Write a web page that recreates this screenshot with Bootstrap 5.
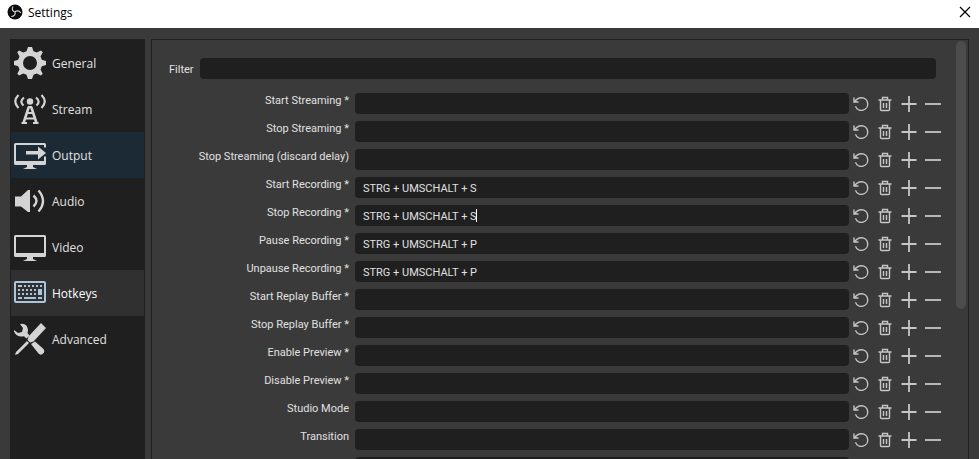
<!DOCTYPE html>
<html lang="en">
<head>
<meta charset="utf-8">
<meta name="viewport" content="width=device-width, initial-scale=1">
<title>Settings</title>
<link href="https://cdn.jsdelivr.net/npm/bootstrap@5.3.0/dist/css/bootstrap.min.css" rel="stylesheet">
<style>
body { background: #3a3a3a; color: #e1e0e1; font-family: "Open Sans", sans-serif; font-size: 12px; line-height: 16px; }
.title-bar { background: #fff; color: #000; height: 28px; padding: 0 8px 4px 7px; gap: 5px; }
.title-bar span { padding-top: 2px; }
.title-bar button { width: 12px; height: 12px; }
.workspace { padding: 11px 10px 0; gap: 6px; min-height: 0; }
.side-nav { background: #1f1f1f; width: 135px; padding: 1px; }
.side-link { height: 46px; padding: 0 3px; gap: 6px; color: #e1e0e1; text-decoration: none; }
.side-link span { padding-top: 2px; }
.side-link svg { width: 32px; height: 32px; flex: none; color: #d4d4d4; }
.side-link.hovered { background: #1c2a36; }
.side-link.current { background: #303030; color: #fff; }
.side-link.current svg { color: #a9c4dd; }
.panel { border: 1px solid #1f1f1f; border-bottom: 0; min-width: 0; padding: 1px 2px 0 17px; font-family: Roboto, sans-serif; font-size: 11px; }
.form-area { padding: 17px 11px 0 0; min-width: 0; }
.filter-row { gap: 7px; margin: 0 9px 14px 0; }
.filter-row label { width: 24px; padding-top: 2px; }
.dark-field { background: #1f1f1f; color: #e1e0e1; border: 0; border-radius: 4px; height: 21px; padding: 2px 8px 0; min-width: 0; outline: 0; font-size: 11px; }
.hotkey-row { height: 28px; flex: none; }
.hotkey-name { width: 180px; margin-right: 6px; line-height: 16px; flex: none; }
.tool-btn { width: 24px; height: 21px; color: #c6c6c6; }
.tool-btn svg { width: 16px; height: 16px; }
.caret { left: 121px; top: 4px; width: 1px; height: 13px; background: #fff; }
.scroll-thumb { width: 10px; height: 64%; background: #4c4c4c; border-radius: 5px; }
</style>
<script src="https://cdn.jsdelivr.net/npm/bootstrap@5.3.0/dist/js/bootstrap.bundle.min.js"></script>
</head>
<body class="vh-100 overflow-hidden d-flex flex-column">
<svg class="d-none" aria-hidden="true">
  <symbol id="i-reset" viewBox="0 0 16 16"><path d="M1 1.500v4.500h4.500M1.500 6C3 3.500 5.500 1.700 8.500 1.700a6.300 6.300 0 1 1-6 8.500" fill="none" stroke="currentColor" stroke-width="1.400"/></symbol>
  <symbol id="i-trash" viewBox="0 0 16 16"><path d="M1.500 4h13M5.500 4v-2.500h5v2.500M3.500 4v9.500q0 1 1 1h7q1 0 1-1v-9.500M6.500 7v5M9.500 7v5" fill="none" stroke="currentColor" stroke-width="1.400"/></symbol>
  <symbol id="i-plus" viewBox="0 0 16 16"><path d="M8 0v16M0.500 8h15" fill="none" stroke="currentColor" stroke-width="1.800"/></symbol>
  <symbol id="i-minus" viewBox="0 0 16 16"><path d="M0 8h16" fill="none" stroke="currentColor" stroke-width="1.800"/></symbol>
</svg>

<header class="title-bar d-flex align-items-center flex-shrink-0">
  <svg width="16" height="16" viewBox="0 0 32 32" aria-hidden="true">
    <circle cx="16" cy="16" r="15" fill="#0c0c0c"/>
    <g fill="none" stroke="#d0d0d0" stroke-width="2.400">
      <path id="blade" d="M16 16C11 15 9 10 12 5"/>
      <use href="#blade" transform="rotate(120 16 16)"/>
      <use href="#blade" transform="rotate(240 16 16)"/>
    </g>
  </svg>
  <span class="flex-grow-1">Settings</span>
  <button type="button" class="btn p-0 border-0 d-flex" aria-label="Close">
    <svg width="12" height="12" viewBox="0 0 12 12"><path d="M1 1l10 10M11 1L1 11" stroke="#000" stroke-width="1.200"/></svg>
  </button>
</header>

<main class="workspace d-flex flex-grow-1">
  <nav class="side-nav flex-shrink-0" aria-label="Sections">
    <a class="side-link d-flex align-items-center" href="#general">
      <svg viewBox="0 0 32 32" fill="currentColor"><path fill-rule="evenodd" d="M14 0h4l1.500 4.300 3.200 1.300L27 3.500 28.800 5.300 26.500 9.500l1.300 3.200L32 14v4l-4.200 1.300-1.300 3.200L28.700 26.700 27 28.500l-4.300-2-3.200 1.300L18 32h-4l-1.500-4.200-3.200-1.300L5 28.500 3.300 26.700l2.200-4.200-1.300-3.200L0 18v-4l4.200-1.300 1.300-3.200L3.200 5.300 5 3.500l4.300 2.100 3.200-1.300zM16 9a7 7 0 1 0 0 14 7 7 0 0 0 0-14z"/></svg>
      <span>General</span></a>
    <a class="side-link d-flex align-items-center" href="#stream">
      <svg viewBox="0 0 32 32" fill="none" stroke="currentColor"><path d="M4.500 2Q-2 8.500 4.500 15M27.500 2Q34 8.500 27.500 15M10 4.500Q5 8.500 9.500 12.500M22 4.500Q27 8.500 22.500 12.500" stroke-width="2.200"/><circle cx="16" cy="8.500" r="3.200" fill="currentColor" stroke="none"/><path d="M14.800 14L9.500 30M17.200 14L22.500 30" stroke-width="2.600"/><path d="M14 14h4M13 20h6M11.500 25.500h9M7.500 30h5.500M19 30h5.500" stroke-width="2"/></svg>
      <span>Stream</span></a>
    <a class="side-link hovered d-flex align-items-center" href="#output">
      <svg viewBox="0 -1 32 32" fill="currentColor"><path d="M1.500 3h29q1.500 0 1.500 1.500v3h-2V5H2v16h28v-4.500h2v7q0 1.500-1.500 1.500h-29Q0 25 0 23.500v-19Q0 3 1.500 3zM12 11h12V6.500l8 6.500-8 6.500v-5H12zM13 25h6v2l4 2H9l4-2z"/></svg>
      <span>Output</span></a>
    <a class="side-link d-flex align-items-center" href="#audio">
      <svg viewBox="0 0 32 32"><path d="M1 11.500h6L14 5h2v22h-2l-7-5.500H1z" fill="currentColor"/><path d="M19.500 10.500q6 5.500 0 11M24.500 5.500q9 10.500 0 21" fill="none" stroke="currentColor" stroke-width="2.400"/></svg>
      <span>Audio</span></a>
    <a class="side-link d-flex align-items-center" href="#video">
      <svg viewBox="0 -1 32 32" fill="currentColor"><path fill-rule="evenodd" d="M1.500 3h29Q32 3 32 4.500v19q0 1.500-1.500 1.500h-29Q0 25 0 23.500v-19Q0 3 1.500 3zM2 5v16h28V5zM13 25h6v2l4 2H9l4-2z"/></svg>
      <span>Video</span></a>
    <a class="side-link current d-flex align-items-center" href="#hotkeys" aria-current="page">
      <svg viewBox="0 -1 32 32" fill="none" stroke="currentColor" stroke-width="2"><rect x="1" y="4" width="30" height="20" rx="1"/><path d="M4 8h4M10 8h2M14 8h2M18 8h2M22 8h2M26 8h2M4 12h2M8 12h2M12 12h2M16 12h2M20 12h2M4 16h2M8 16h2M12 16h2M16 16h2M20 16h2M4 20h4M10 20h12M24 20h4"/><path d="M24 11h4v6h-4z" fill="currentColor" stroke="none"/></svg>
      <span>Hotkeys</span></a>
    <a class="side-link d-flex align-items-center" href="#advanced">
      <svg viewBox="0 0 32 32"><g fill="currentColor"><path d="M27 0l5 5-12.500 13.500-3.500 1-2.500-2.500 1-3.500zM17 21l4-2.500 8.500 7.500q2 3-1 5-2 1.500-4-.5zM13 18l2 2L4 31l-3 1 1-3z"/><path d="M6 1q7-1.500 8 6l-.5 3 2 2.500-3 3-2.500-2.300Q3 15 0 8.500V7l4 3 4-1 1-4z"/></g></svg>
      <span>Advanced</span></a>
  </nav>

  <section class="panel d-flex flex-grow-1 overflow-hidden">
    <form class="form-area flex-grow-1 d-flex flex-column">
      <div class="filter-row d-flex align-items-center flex-shrink-0">
        <label for="filter">Filter</label>
        <input id="filter" type="text" class="dark-field flex-grow-1">
      </div>
      <div id="rows"></div>
    </form>
    <div class="scroll-thumb flex-shrink-0"></div>
  </section>
</main>

<script>
const hotkeys = [
  ["Start Streaming *", ""], ["Stop Streaming *", ""], ["Stop Streaming (discard delay)", ""],
  ["Start Recording *", "STRG + UMSCHALT + S"], ["Stop Recording *", "STRG + UMSCHALT + S", true],
  ["Pause Recording *", "STRG + UMSCHALT + P"], ["Unpause Recording *", "STRG + UMSCHALT + P"],
  ["Start Replay Buffer *", ""], ["Stop Replay Buffer *", ""], ["Enable Preview *", ""],
  ["Disable Preview *", ""], ["Studio Mode", ""], ["Transition", ""], ["", ""]
];
const tools = [["reset", "Revert"], ["trash", "Clear"], ["plus", "Add"], ["minus", "Remove"]];
document.getElementById("rows").innerHTML = hotkeys.map(([name, keys, editing], i) => `
  <div class="hotkey-row d-flex align-items-start">
    <label class="hotkey-name text-end text-nowrap" for="hk${i}">${name}</label>
    <div class="position-relative flex-grow-1 d-flex">
      <input id="hk${i}" type="text" class="dark-field w-100" value="${keys}">
      ${editing ? '<span class="caret position-absolute"></span>' : ""}
    </div>
    ${tools.map(([icon, tip]) => `<button type="button" class="tool-btn btn p-0 border-0 d-flex align-items-center justify-content-center" aria-label="${tip}"><svg><use href="#i-${icon}"/></svg></button>`).join("")}
  </div>`).join("");
</script>
</body>
</html>
